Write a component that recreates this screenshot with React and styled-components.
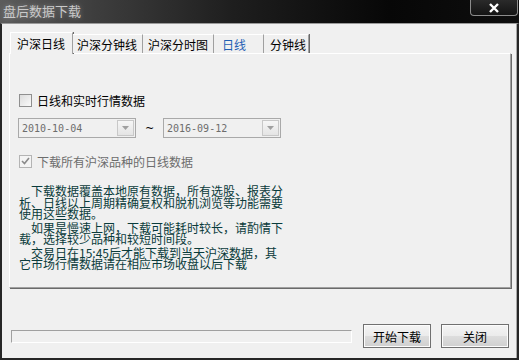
import React, { useState } from "react";
import styled, { createGlobalStyle } from "styled-components";

// ====== Globals ======
const GlobalStyle = createGlobalStyle`
  html, body { margin: 0; padding: 0; background: #000; }
  body { font-family: "Noto Sans CJK SC", "Liberation Sans", sans-serif; }
`;

const cjk = `"Noto Sans CJK SC", "Liberation Sans", sans-serif`;

// ====== Window frame ======
const Window = styled.div`
  width: 519px;
  height: 360px;
  display: flex;
  flex-direction: column;
  overflow: hidden;
`;

const TitleBar = styled.div`
  height: 23px;
  flex: none;
  display: flex;
  align-items: flex-start;
  justify-content: space-between;
  background: linear-gradient(90deg, #5c5c5c 0%, #3e3e3e 18%, #1e1e1e 45%, #070707 75%, #0e0e0e 100%);
`;

const Title = styled.div`
  font-family: ${cjk};
  font-size: 13px;
  line-height: 13px;
  color: #c9c9c9;
  padding: 4px 0 0 3px;
  text-shadow: 0 0 5px rgba(255, 255, 255, 0.35);
`;

const CloseButton = styled.div`
  width: 46px;
  height: 15px;
  margin-right: 1px;
  display: flex;
  align-items: center;
  justify-content: center;
  background: linear-gradient(#2a2a2a, #141414);
  border: 1px solid #8c8c8c;
  border-top: none;
  border-radius: 0 0 4px 4px;
`;

const Body = styled.div`
  flex: 1;
  display: flex;
  flex-direction: column;
  background: #f0f0f0;
  border: 2px solid #262626;
  border-top: 1px solid #9a9a9a;
  box-shadow: inset -1px 0 #a8a8a8;
  padding: 7px 6px 0 7px;
`;

// ====== Tabs ======
const TabRow = styled.div`
  display: flex;
  align-items: flex-end;
  height: 22px;
  margin-left: 1px;
  position: relative;
  z-index: 1;
`;

const Tab = styled.div`
  box-sizing: border-box;
  width: ${p => p.w}px;
  height: ${p => (p.active ? 22 : 19)}px;
  padding: 0 0 0 ${p => p.pad}px;
  display: flex;
  align-items: center;
  font-family: ${cjk};
  font-size: 12px;
  color: ${p => (p.blue ? "#1f5fb4" : "#000")};
  background: #f0f0f0;
  border-top: 1px solid #fff;
  border-left: ${p => (p.active ? "1px solid #fff" : "none")};
  border-right: 1px solid #a0a0a0;
  box-shadow: 1px 0 #6a6a6a;
  margin-bottom: ${p => (p.active ? -1 : 0)}px;
  padding-bottom: ${p => (p.active ? 1 : 0)}px;
  white-space: nowrap;
`;

const Panel = styled.div`
  box-sizing: border-box;
  width: 502px;
  height: 235px;
  border-top: 1px solid #fff;
  border-left: 1px solid #fff;
  border-right: 1px solid #a0a0a0;
  border-bottom: 1px solid #a0a0a0;
  box-shadow: 1px 1px #6a6a6a;
  padding: 39px 0 0 8px;
  display: flex;
  flex-direction: column;
`;

// ====== Form parts ======
const CheckRow = styled.label`
  display: flex;
  align-items: center;
  gap: 5px;
  margin-left: 1px;
  margin-top: ${p => p.top || 0}px;
  height: 14px;
  font-family: ${cjk};
  font-size: 12px;
  color: ${p => (p.disabled ? "#6d6d6d" : "#000")};
`;

const Box = styled.span`
  box-sizing: border-box;
  width: 13px;
  height: 13px;
  border: 1px solid ${p => (p.disabled ? "#b4b4b4" : "#8f8f8f")};
  background: ${p => (p.disabled ? "#f4f4f4" : "linear-gradient(135deg, #dcdcdc, #fafafa)")};
  display: flex;
  align-items: center;
  justify-content: center;
`;

const DateRow = styled.div`
  display: flex;
  align-items: center;
  margin-top: 11px;
`;

const DateBox = styled.div`
  box-sizing: border-box;
  width: 118px;
  height: 20px;
  border: 1px solid #a9a9a9;
  display: flex;
  align-items: center;
  justify-content: space-between;
  padding: 0 1px 0 3px;
  font-family: "DejaVu Sans Mono", "Liberation Mono", monospace;
  font-size: 10px;
  color: #6d6d6d;
`;

const DropButton = styled.div`
  box-sizing: border-box;
  width: 17px;
  height: 16px;
  border: 1px solid #c8c8c8;
  background: linear-gradient(#f6f6f6, #e4e4e4);
  display: flex;
  align-items: center;
  justify-content: center;
`;

const Tilde = styled.div`
  width: 27px;
  text-align: center;
  font-family: "DejaVu Sans", sans-serif;
  font-size: 11px;
  color: #000;
`;

const Info = styled.div`
  margin-top: 17px;
  margin-left: 1px;
  font-family: ${cjk};
  font-size: 12px;
  color: #0a3b3b;
  white-space: nowrap;
`;

const Para = styled.div`
  margin-bottom: 2px;
`;

const Line = styled.div`
  height: 11.5px;
  line-height: 11.5px;
`;

// ====== Footer ======
const Footer = styled.div`
  display: flex;
  align-items: center;
  margin: 36px 2px 0 2px;
  gap: 10px;
`;

const Progress = styled.div`
  box-sizing: border-box;
  width: 341px;
  height: 13px;
  margin-right: 1px;
  border-top: 1px solid #a0a0a0;
  border-left: 1px solid #a0a0a0;
  border-right: 1px solid #fff;
  border-bottom: 1px solid #fff;
`;

const Button = styled.button`
  box-sizing: border-box;
  width: 68px;
  height: 24px;
  padding: 0;
  border: 1px solid #707070;
  background: linear-gradient(#f4f4f4 0%, #ebebeb 50%, #dddddd 51%, #cfcfcf 100%);
  box-shadow: inset 0 0 0 1px #fcfcfc;
  font-family: ${cjk};
  font-size: 12px;
  color: #000;
`;

// ====== Icons ======
const XIcon = () => (
  <svg width="12" height="10" viewBox="0 0 12 10">
    <path d="M2 1 L10 9 M10 1 L2 9" stroke="#fff" strokeWidth="2.4" />
  </svg>
);

const DownArrow = () => (
  <svg width="7" height="4" viewBox="0 0 7 4">
    <path d="M0 0 H7 L3.5 4 Z" fill="#a0a0a0" />
  </svg>
);

const Tick = () => (
  <svg width="9" height="8" viewBox="0 0 9 8">
    <path d="M1 4 L3.5 6.5 L8 1" fill="none" stroke="#8a8a8a" strokeWidth="1.6" />
  </svg>
);

const tabs = [
  { label: "沪深日线", w: 63, pad: 6 },
  { label: "沪深分钟线", w: 70, pad: 4 },
  { label: "沪深分时图", w: 71, pad: 5 },
  { label: "日线", w: 50, pad: 8, blue: true },
  { label: "分钟线", w: 45, pad: 6 },
];

const notes = [
  ["　下载数据覆盖本地原有数据，所有选股、报表分", "析、日线以上周期精确复权和脱机浏览等功能需要", "使用这些数据。"],
  ["　如果是慢速上网，下载可能耗时较长，请酌情下", "载，选择较少品种和较短时间段。"],
  ["　交易日在15:45后才能下载到当天沪深数据，其", "它市场行情数据请在相应市场收盘以后下载"],
];

// ====== Main Component ======
const App = () => {
  const [active] = useState(0);

  return (
    <>
      <GlobalStyle />
      <Window>
        <TitleBar>
          <Title>盘后数据下载</Title>
          <CloseButton><XIcon /></CloseButton>
        </TitleBar>

        <Body>
          <TabRow>
            {tabs.map((t, i) => (
              <Tab key={t.label} w={t.w} pad={t.pad} blue={t.blue} active={i === active}>
                {t.label}
              </Tab>
            ))}
          </TabRow>

          <Panel>
            <CheckRow>
              <Box />
              日线和实时行情数据
            </CheckRow>

            <DateRow>
              <DateBox>2010-10-04<DropButton><DownArrow /></DropButton></DateBox>
              <Tilde>~</Tilde>
              <DateBox>2016-09-12<DropButton><DownArrow /></DropButton></DateBox>
            </DateRow>

            <CheckRow disabled top={16}>
              <Box disabled><Tick /></Box>
              下载所有沪深品种的日线数据
            </CheckRow>

            <Info>
              {notes.map((p, i) => (
                <Para key={i}>
                  {p.map(l => <Line key={l}>{l}</Line>)}
                </Para>
              ))}
            </Info>
          </Panel>

          <Footer>
            <Progress />
            <Button>开始下载</Button>
            <Button>关闭</Button>
          </Footer>
        </Body>
      </Window>
    </>
  );
};

export default App;
